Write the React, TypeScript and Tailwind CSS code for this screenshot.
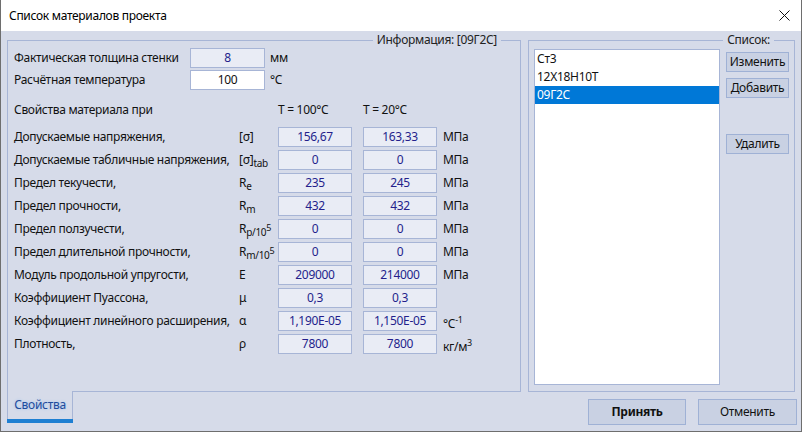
import React from 'react'

type Row = {
  label: string
  sym: React.ReactNode
  a: string
  b: string
  unit?: React.ReactNode
}

const Sub = ({ children }: { children: React.ReactNode }) => (
  <span className="relative top-[3px] text-[10px] leading-none">{children}</span>
)

const Sup = ({ children }: { children: React.ReactNode }) => (
  <span className="relative -top-[5px] text-[9px] leading-none">{children}</span>
)

const rows: Row[] = [
  { label: 'Допускаемые напряжения,', sym: '[σ]', a: '156,67', b: '163,33', unit: 'МПа' },
  { label: 'Допускаемые табличные напряжения,', sym: <>[σ]<Sub>tab</Sub></>, a: '0', b: '0', unit: 'МПа' },
  { label: 'Предел текучести,', sym: <>R<Sub>e</Sub></>, a: '235', b: '245', unit: 'МПа' },
  { label: 'Предел прочности,', sym: <>R<Sub>m</Sub></>, a: '432', b: '432', unit: 'МПа' },
  { label: 'Предел ползучести,', sym: <>R<Sub>p/10<Sup>5</Sup></Sub></>, a: '0', b: '0', unit: 'МПа' },
  { label: 'Предел длительной прочности,', sym: <>R<Sub>m/10<Sup>5</Sup></Sub></>, a: '0', b: '0', unit: 'МПа' },
  { label: 'Модуль продольной упругости,', sym: 'E', a: '209000', b: '214000', unit: 'МПа' },
  { label: 'Коэффициент Пуассона,', sym: 'μ', a: '0,3', b: '0,3' },
  {
    label: 'Коэффициент линейного расширения,',
    sym: 'α',
    a: '1,190E-05',
    b: '1,150E-05',
    unit: <span className="relative top-[3px]">°C<Sup>-1</Sup></span>,
  },
  {
    label: 'Плотность,',
    sym: 'ρ',
    a: '7800',
    b: '7800',
    unit: <span className="relative top-[3px]">кг/м<Sup>3</Sup></span>,
  },
]

function ValueBox({ value, white }: { value: string; white?: boolean }) {
  return (
    <div
      className={
        white
          ? 'flex items-center justify-center border border-[#a7b5d6] bg-white text-[#111]'
          : 'flex items-center justify-center border border-[#a7b5d6] bg-[#e9ecf5] text-[#241f8c]'
      }
    >
      {value}
    </div>
  )
}

function Btn({ children, bold }: { children: React.ReactNode; bold?: boolean }) {
  return (
    <button
      className={
        bold
          ? 'flex items-center justify-center whitespace-nowrap border border-[#9fb1d5] bg-[#c9d1e3] font-bold text-[#111]'
          : 'flex items-center justify-center whitespace-nowrap border border-[#9fb1d5] bg-[#c9d1e3] text-[#111]'
      }
    >
      {children}
    </button>
  )
}

export default function App() {
  return (
    <div className="flex h-[432px] w-[802px] flex-col whitespace-nowrap border-x border-b border-[#6e6e6e] bg-[#d6dbe9] font-['Noto_Sans',sans-serif] text-[12px] tracking-[-0.3px] text-[#111]">
      {/* Title bar */}
      <div className="flex h-[31px] shrink-0 items-center justify-between bg-white pl-[8px] pr-[10px]">
        <span className="text-[#000]">Список материалов проекта</span>
        <svg width="11" height="11" viewBox="0 0 11 11" className="mr-[1px]">
          <path d="M0.5 0.5 L10.5 10.5 M10.5 0.5 L0.5 10.5" stroke="#111" strokeWidth="1" fill="none" />
        </svg>
      </div>

      {/* Body */}
      <div className="flex flex-1 gap-[7px] pl-[6px] pt-[9px]">
        {/* Left: properties page */}
        <div className="flex w-[514px] flex-col">
          <div className="relative h-[351px] border-x border-t border-[#a7b5d6] pl-[6px] pt-[7px]">
            <span className="absolute -top-[9px] right-[19px] bg-[#d6dbe9] px-[4px] leading-[16px] text-[#222]">
              Информация: [09Г2С]
            </span>

            <div className="flex h-[22px]">
              <div className="w-[176px] pt-[1px]">Фактическая толщина стенки</div>
              <div className="grid h-[19px] w-[75px]">
                <ValueBox value="8" />
              </div>
              <div className="ml-[5px] pt-[1px]">мм</div>
            </div>
            <div className="flex h-[22px]">
              <div className="w-[176px] pt-[1px]">Расчётная температура</div>
              <div className="grid h-[20px] w-[75px]">
                <ValueBox value="100" white />
              </div>
              <div className="ml-[5px] pt-[1px]">°C</div>
            </div>

            <div className="flex h-[35px] items-center">
              <div className="w-[264px]">Свойства материала при</div>
              <div className="w-[85px]">T = 100°C</div>
              <div>T = 20°C</div>
            </div>

            {rows.map((r) => (
              <div key={r.label} className="flex h-[23px]">
                <div className="flex h-[20px] w-[225px] items-center">{r.label}</div>
                <div className="flex h-[20px] w-[39px] items-center">{r.sym}</div>
                <div className="grid h-[20px] w-[74px]">
                  <ValueBox value={r.a} />
                </div>
                <div className="ml-[11px] grid h-[20px] w-[74px]">
                  <ValueBox value={r.b} />
                </div>
                <div className="ml-[6px] flex h-[20px] items-center">{r.unit}</div>
              </div>
            ))}
          </div>

          {/* Tab strip */}
          <div className="flex">
            <div className="flex h-[32px] w-[66px] flex-col">
              <div className="flex flex-1 items-center justify-center border-x border-[#a7b5d6] pb-[1px] text-[#1f4c9c] [text-shadow:0_0_3px_#9ec3f0]">
                Свойства
              </div>
              <div className="h-[4px] bg-[#1e7fd2]" />
            </div>
            <div className="h-[1px] flex-1 bg-[#a7b5d6]" />
          </div>
        </div>

        {/* Right: list */}
        <div className="flex w-[268px] flex-col">
          <div className="relative flex h-[352px] w-[267px] border border-[#a7b5d6] pb-[6px] pl-[5px] pt-[8px]">
            <span className="absolute -top-[9px] right-[20px] bg-[#d6dbe9] px-[4px] leading-[16px] text-[#222]">
              Список:
            </span>
            <div className="flex w-[186px] flex-col border border-[#a7b5d6] bg-white">
              <div className="flex h-[18px] items-center pl-[2px]">Ст3</div>
              <div className="flex h-[18px] items-center pl-[2px]">12Х18Н10Т</div>
              <div className="flex h-[18px] items-center bg-[#0078d7] pl-[2px] text-white">09Г2С</div>
            </div>
            <div className="ml-[6px] flex w-[63px] flex-col pt-[3px]">
              <div className="grid h-[20px]">
                <Btn>Изменить</Btn>
              </div>
              <div className="mt-[6px] grid h-[20px]">
                <Btn>Добавить</Btn>
              </div>
              <div className="mt-[36px] grid h-[20px]">
                <Btn>Удалить</Btn>
              </div>
            </div>
          </div>
          <div className="mt-[7px] flex justify-end gap-[12px]">
            <div className="grid h-[26px] w-[98px]">
              <Btn bold>Принять</Btn>
            </div>
            <div className="-mr-[1px] grid h-[26px] w-[99px]">
              <Btn>Отменить</Btn>
            </div>
          </div>
        </div>
      </div>
    </div>
  )
}
